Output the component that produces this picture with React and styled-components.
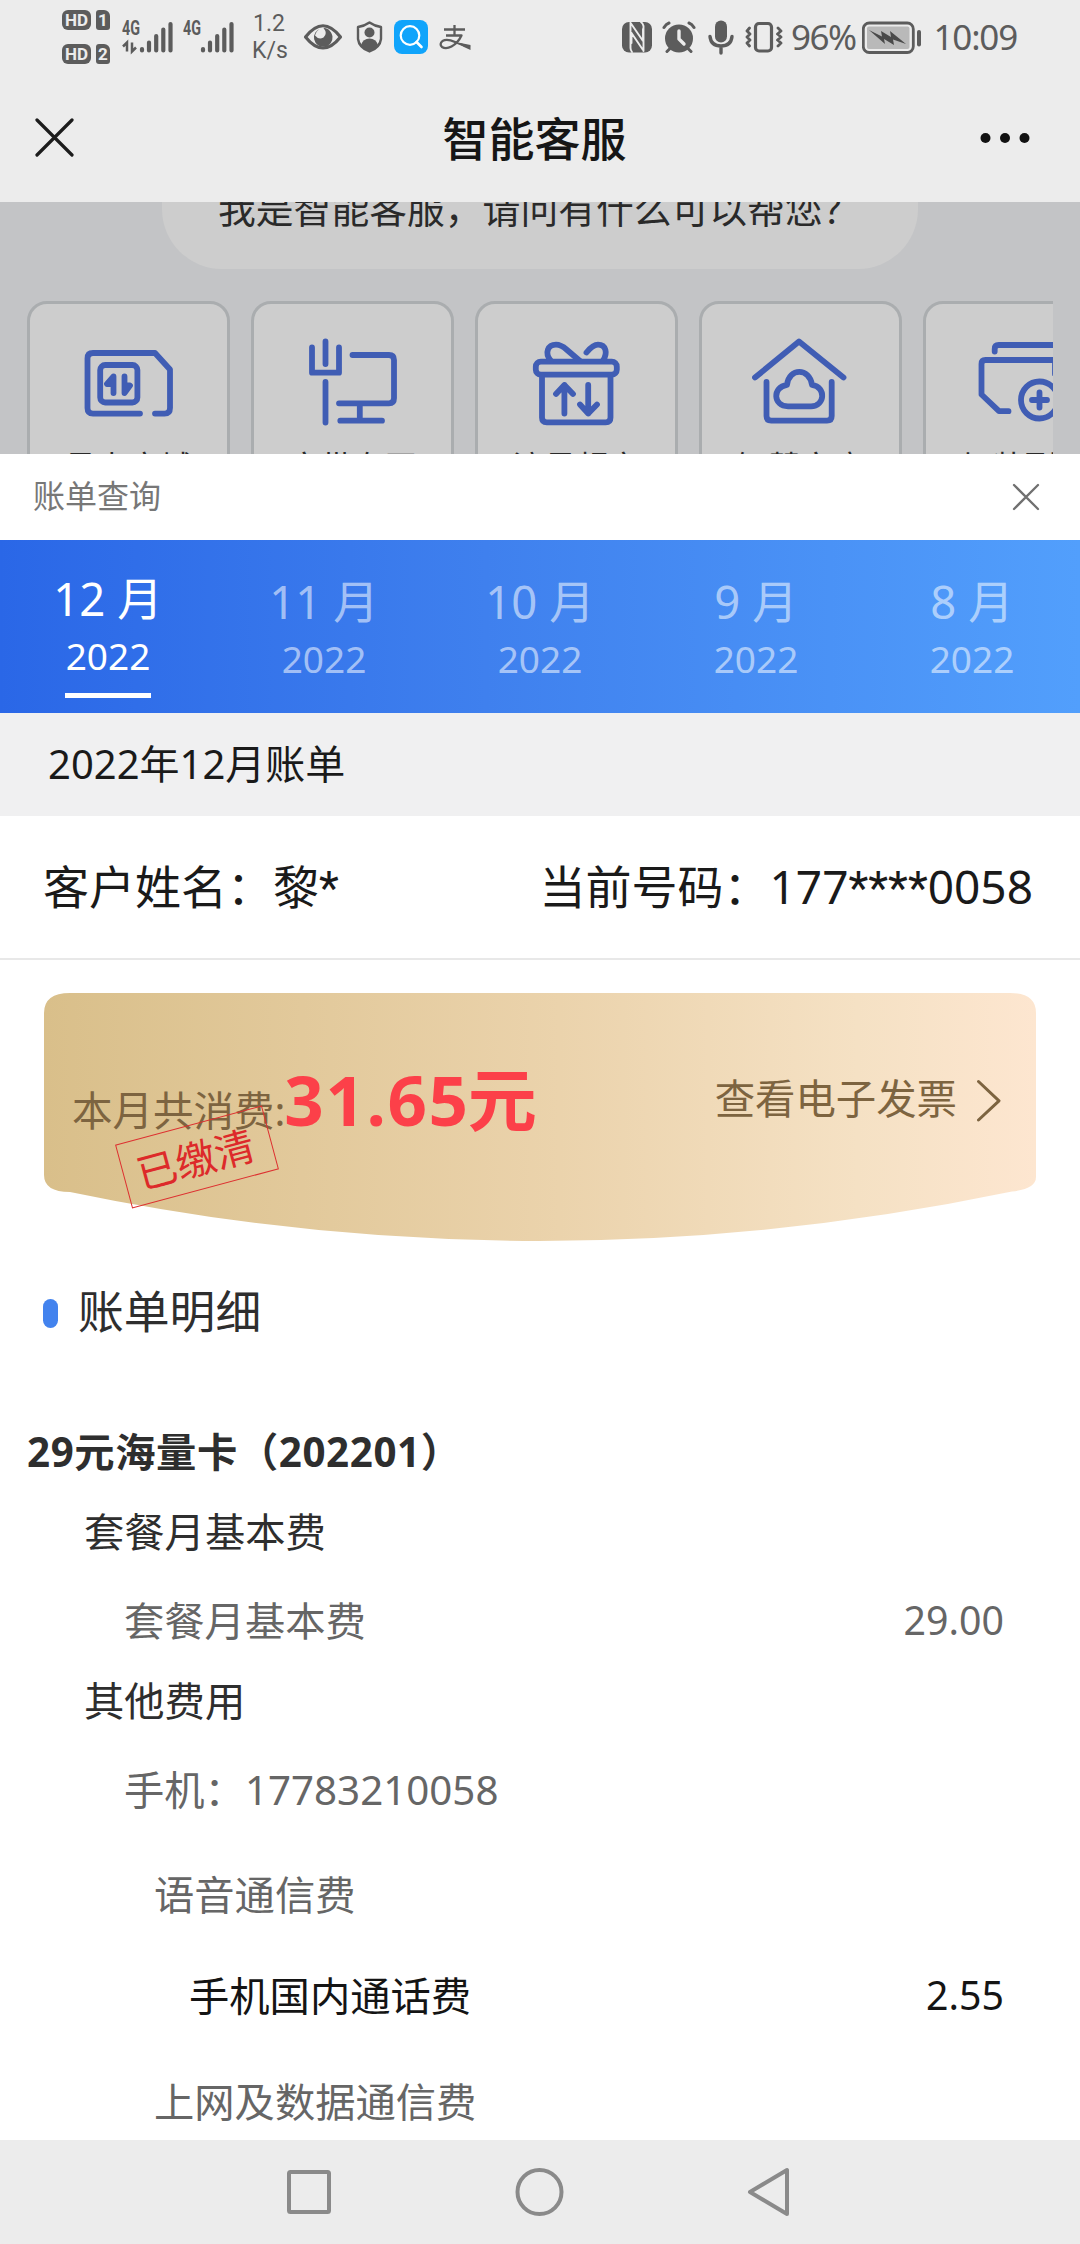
import React from 'react';
import styled, { createGlobalStyle } from 'styled-components';

const GlobalStyle = createGlobalStyle`
  * {
    box-sizing: border-box;
  }

  body {
    background-color: #ffffff;
    font-family: 'Noto Sans', 'Noto Sans CJK SC', sans-serif;
    margin: 0;
  }
`

const Page = styled.div`
  display: flex;
  flex-direction: column;
  height: 2244px;
  overflow: hidden;
  width: 1080px;
`

const StatusBar = styled.div`
  background-color: #ececec;
  color: #5c5c5c;
  display: flex;
  flex-shrink: 0;
  height: 74px;
  justify-content: space-between;
  padding: 0 63px 0 62px;
`

const StatusGroup = styled.div`
  align-items: center;
  display: flex;
  height: 73px;
`

const SimList = styled.div`
  display: flex;
  flex-direction: column;
  gap: 14px;
`

const Sim = styled.div`
  display: flex;
  gap: 5px;
`

const SimTag = styled.span`
  background-color: #5c5c5c;
  border-radius: ${props => props.$slot ? '3px 6px 3px 3px' : '6px'};
  color: #ececec;
  font-family: Roboto, sans-serif;
  font-size: 17px;
  font-weight: 700;
  height: 20px;
  line-height: 21px;
  text-align: center;
  width: ${props => props.$slot ? '14px' : '29px'};
`

const Signal = styled.svg`
  height: 34px;
  margin-left: ${props => props.$gap}px;
  overflow: visible;
  width: 51px;
`

const SignalText = styled.text`
  fill: #5c5c5c;
  font-family: Roboto, sans-serif;
  font-size: 20px;
  font-weight: 700;
`

const Speed = styled.div`
  font-family: Roboto, sans-serif;
  font-size: 23px;
  line-height: 27px;
  margin-left: 18px;
  text-align: center;
  width: 34px;
`

const StatusIcon = styled.svg`
  fill: none;
  height: 36px;
  margin-left: ${props => props.$gap}px;
  stroke: #5c5c5c;
  stroke-linecap: round;
  stroke-linejoin: round;
  width: ${props => props.$width}px;
`

const StatusText = styled.span`
  font-size: 35px;
  letter-spacing: ${props => props.$spacing}px;
  line-height: 40px;
  margin-left: ${props => props.$gap}px;
  padding-top: 1px;
`

const TitleBar = styled.header`
  align-items: center;
  background-color: #ececec;
  display: flex;
  flex-shrink: 0;
  height: 128px;
  justify-content: space-between;
  padding: 0 49px 0 34px;
`

const Title = styled.h1`
  color: #161616;
  font-size: 46px;
  font-weight: 500;
  line-height: 60px;
  margin: 0;
  padding: 0 0 1px 15px;
`

const LineIcon = styled.svg`
  display: block;
  fill: none;
  flex-shrink: 0;
  stroke: ${props => props.color};
  stroke-linecap: round;
  stroke-linejoin: round;
`

const Chat = styled.section`
  background-color: #c3c4c6;
  display: flex;
  flex-direction: column;
  flex-shrink: 0;
  height: 252px;
  overflow: hidden;
`

const Bubble = styled.div`
  align-self: center;
  background-color: #cdcdcd;
  border-radius: 0 0 60px 60px;
  color: #2a2a2a;
  flex-shrink: 0;
  font-size: 37.8px;
  height: 67px;
  line-height: 14px;
  padding-left: 56px;
  white-space: nowrap;
  width: 756px;
`

const Services = styled.div`
  display: flex;
  flex-shrink: 0;
  gap: 21px;
  margin: 32px 27px 0;
  overflow: hidden;
`

const Service = styled.div`
  align-items: center;
  background-color: #cdcdcd;
  border: 3px solid #aaadaf;
  border-radius: 20px;
  color: #2a2a2a;
  display: flex;
  flex-direction: column;
  flex-shrink: 0;
  font-size: 32px;
  height: 220px;
  line-height: 40px;
  padding-top: 29px;
  width: 203px;
`

const ServiceIcon = styled.svg`
  fill: none;
  height: 100px;
  margin-bottom: 14px;
  stroke: #405db4;
  stroke-linecap: round;
  stroke-linejoin: round;
  stroke-width: 5.8;
  width: 120px;
`

const SheetHeader = styled.div`
  align-items: center;
  color: #777777;
  display: flex;
  flex-shrink: 0;
  font-size: 32px;
  height: 86px;
  justify-content: space-between;
  padding: 0 39px 0 33px;
`

const SheetTitle = styled.span`
  line-height: 40px;
  padding-bottom: 2px;
`

const Months = styled.nav`
  background: linear-gradient(90deg, #2a67e7 0%, #3f80ee 45%, #529ffc 100%);
  display: grid;
  flex-shrink: 0;
  grid-template-columns: repeat(5, 1fr);
  height: 173px;
`

const Month = styled.div`
  align-items: center;
  color: ${props => props.$active ? '#ffffff' : 'rgba(255, 255, 255, 0.55)'};
  display: flex;
  flex-direction: column;
  font-size: 45.5px;
  line-height: 56px;
  padding-top: ${props => props.$active ? '30px' : '33px'};
`

const Year = styled.span`
  border-bottom: 5px solid ${props => props.$active ? '#ffffff' : 'transparent'};
  font-size: 37px;
  height: 72px;
  line-height: 60px;
  padding: 0 1px;
`

const BillTitle = styled.h2`
  background-color: #f0f0f1;
  color: #1a1a1a;
  flex-shrink: 0;
  font-size: 40px;
  font-weight: 400;
  height: 103px;
  line-height: 101px;
  margin: 0;
  padding-left: 48px;
`

const Customer = styled.div`
  border-bottom: 2px solid #e8e8e8;
  color: #1a1a1a;
  display: flex;
  flex-shrink: 0;
  font-size: 46px;
  height: 144px;
  justify-content: space-between;
  line-height: 140px;
  padding: 0 47px 0 43px;
`

const Mask = styled.span`
  font-family: Roboto, sans-serif;
`

const Summary = styled.section`
  display: flex;
  flex-shrink: 0;
  height: 248px;
  justify-content: space-between;
  margin: 33px 44px 0;
  position: relative;

  &:before {
    background: linear-gradient(90deg, #d9bf8a 0%, #ebd3ac 52%, #f5e1c4 82%, #fde6d0 100%);
    clip-path: path('M26 0H966Q992 0 992 20V184Q992 196 968 198.500Q496 297 26 199Q0 199 0 182V20Q0 0 26 0Z');
    content: '';
    inset: 0;
    position: absolute;
    z-index: -1;
  }
`

const Total = styled.div`
  align-items: baseline;
  color: #7d6440;
  display: flex;
  font-size: 40.5px;
  height: 213px;
  line-height: 213px;
  padding-left: 28px;
`

const Amount = styled.strong`
  color: #fc4049;
  font-size: 69px;
  font-weight: 700;
  letter-spacing: 1.6px;
  margin-left: -1px;
`

const Unit = styled.span`
  margin-left: -2px;
`

const Stamp = styled.span`
  border: 1.5px solid #dd3030;
  color: #dd2a2a;
  font-size: 40px;
  height: 66px;
  left: 77px;
  line-height: 67px;
  padding-right: 4px;
  position: absolute;
  text-align: center;
  top: 131px;
  transform: rotate(-15deg);
  width: 152px;
`

const InvoiceLink = styled.a`
  align-items: center;
  color: #7d6440;
  display: flex;
  font-size: 40.4px;
  gap: 18px;
  height: 213px;
  padding-right: 34px;
`

const LinkText = styled.span`
  line-height: 50px;
  padding-bottom: 1px;
`

const SectionTitle = styled.h3`
  align-items: center;
  color: #2e2e2e;
  display: flex;
  flex-shrink: 0;
  font-size: 45.8px;
  font-weight: 400;
  gap: 20px;
  height: 72px;
  line-height: 72px;
  margin: 34px 0 62px 43px;

  &:before {
    background-color: #4383ee;
    border-radius: 8px;
    content: '';
    height: 29px;
    margin-top: 4px;
    width: 15px;
  }
`

const Bill = styled.div`
  flex: 1;
  min-height: 0;
  overflow: hidden;
`

const BillRow = styled.div`
  align-items: center;
  color: ${props => props.color};
  display: flex;
  font-size: 40.3px;
  font-weight: ${props => props.$bold ? 700 : 400};
  height: ${props => props.$height}px;
  justify-content: space-between;
  letter-spacing: ${props => props.$bold ? '0.6px' : 'normal'};
  padding: 0 76px 0 ${props => props.$indent}px;
`

const Value = styled.span`
  font-size: 39.3px;
  padding-top: 4px;
`

const NavBar = styled.footer`
  align-items: center;
  background-color: #ececec;
  display: flex;
  flex-shrink: 0;
  gap: 180px;
  height: 104px;
  padding-left: 284px;
`

const services = [
  {
    name: '号卡商城',
    icon: (
      <>
        <path d="M71 80.6H24q-5.500 0-5.500-5.500V25.500q0-5.500 5.500-5.500H86L101 36.500V75q0 5.600-5.500 5.600H86" />
        <rect x="31.200" y="32" width="37.200" height="37.500" rx="5" />
        <path d="M44.500 60V43.500L38 51h6M55.500 43.500V60L61 52.500h-5" />
      </>
    )
  },
  {
    name: '宽带专区',
    icon: (
      <>
        <path d="M19 14.400V39.700H46V14.400M32.500 8.400V31M32.500 49V89.500" />
        <path d="M59.500 22H96q5 0 5 5V65.300q0 5-5 5H46M66.800 70.300V87.700M47.300 87.700H89" />
      </>
    )
  },
  {
    name: '流量超市',
    icon: (
      <>
        <rect x="18.800" y="28.700" width="81" height="13" rx="5" />
        <path d="M25 42V84.500q0 4.800 4.800 4.800H88.700q4.800 0 4.800-4.800V42" />
        <path d="M34 28C27 20 31 11.700 39 11.700c4 0 6.500 1.300 10.500 4.800L63 28M69.500 19.500C74 14 77 11.700 81 11.700c8 0 10 8.300 5 16" />
        <path d="M47.400 80.500V52L39 61M47.400 52L56 61M71.200 52V80.500L63 71.500M71.200 80.500L80 71.500" />
      </>
    )
  },
  {
    name: '智慧家庭',
    icon: (
      <>
        <path d="M14 44.500L58 8.500L102.500 44.500" />
        <path d="M25.500 49V83q0 4.700 4.700 4.700H86q4.700 0 4.700-4.700V49" />
        <path d="M47 73.300C32 73.300 31 54 46 51.800C48 34.500 68.500 34.500 71 51.800C85.500 54 84 73.300 70 73.300Z" />
      </>
    )
  },
  {
    name: '加装副卡',
    icon: (
      <>
        <path d="M29.700 18.500V16q0-4 4-4H100V30" />
        <path d="M43.500 78.200H34L16.500 61.500V31q0-4 4-4H90V41" />
        <circle cx="74.500" cy="67" r="18.500" />
        <path d="M67 67H82M74.500 59.500V74.500" />
      </>
    )
  }
]

const months = [
  { month: 12, year: 2022 },
  { month: 11, year: 2022 },
  { month: 10, year: 2022 },
  { month: 9, year: 2022 },
  { month: 8, year: 2022 }
]

const billRows = [
  { label: '29元海量卡（202201）', indent: 27, height: 80, color: '#2e2e2e', bold: true },
  { label: '套餐月基本费', indent: 84, height: 80, color: '#2e2e2e' },
  { label: '套餐月基本费', value: '29.00', indent: 124, height: 98, color: '#666666' },
  { label: '其他费用', indent: 84, height: 62, color: '#2e2e2e' },
  { label: '手机：17783210058', indent: 124, height: 116, color: '#666666' },
  { label: '语音通信费', indent: 154, height: 94, color: '#666666' },
  { label: '手机国内通话费', value: '2.55', indent: 189, height: 108, color: '#141414' },
  { label: '上网及数据通信费', indent: 154, height: 104, color: '#666666' }
]

const SignalBars = ({ gap, data }) => (
  <Signal $gap={gap} viewBox="0 0 51 34">
    <SignalText x="0" y="15.300" textLength="18" lengthAdjust="spacingAndGlyphs">4G</SignalText>
    {data && <path d="M1 26.500L5 22.500V31.500M10 22.500V31.500L14 27.500" stroke="#5c5c5c" strokeWidth="2.500" fill="none" />}
    <path
      d="M20 29V30.500M27 22.500V30.500M34.200 16V30.500M41.300 9.500V30.500M48.500 4V30.500"
      stroke="#5c5c5c"
      strokeLinecap="round"
      strokeWidth="4.200"
    />
  </Signal>
)

const Status = () => (
  <StatusBar>
    <StatusGroup>
      <SimList>
        <Sim><SimTag>HD</SimTag><SimTag $slot>1</SimTag></Sim>
        <Sim><SimTag>HD</SimTag><SimTag $slot>2</SimTag></Sim>
      </SimList>
      <SignalBars gap={12} data />
      <SignalBars gap={10} />
      <Speed>1.2 K/s</Speed>
      <StatusIcon $gap={17} $width={40} viewBox="0 0 40 36">
        <path d="M2.500 18Q20-4.500 37.500 18Q20 40 2.500 18Z" strokeWidth="3.200" />
        <path d="M18 9.500a9.300 9.300 0 1 0 11.500 8C29 13 25 8.500 20.500 9q4.500 5.500 0 9.500q-5 2.500-8.500-2Q13.500 11 18 9.500Z" fill="#5c5c5c" stroke="none" />
      </StatusIcon>
      <StatusIcon $gap={13} $width={27} viewBox="0 0 27 36">
        <path d="M13.500 3.500Q18.500 7 25 8V20Q24 28.500 13.500 32.500Q3 28.500 2 20V8Q8.500 7 13.500 3.500Z" strokeWidth="2.400" />
        <circle cx="13.500" cy="13.500" r="5" fill="#5c5c5c" stroke="none" />
        <path d="M5 26Q7 19.500 13.500 19.500T22 26Q18 31 13.500 32.500Q8 30.500 5 26Z" fill="#5c5c5c" stroke="none" />
      </StatusIcon>
      <StatusIcon $gap={11} $width={34} viewBox="0 0 34 36">
        <rect y="1" width="34" height="34" rx="8" fill="#10a4fb" stroke="none" />
        <circle cx="16" cy="16.500" r="9.300" stroke="#ffffff" strokeWidth="2.200" />
        <path d="M22.500 23L27.500 28" stroke="#ffffff" strokeWidth="2.600" />
      </StatusIcon>
      <StatusIcon $gap={11} $width={32} viewBox="0 0 32 36">
        <path d="M5 10.500H26M15.500 6V16M7 16.500H22.500Q19 24 12.500 27.500Q7 30.500 3 28Q0 25 3.500 22Q8 19.500 16 23Q24 26.500 31 28" strokeLinecap="butt" strokeWidth="2.300" />
        <path d="M19 23.500L31.500 26V31Q25 28.500 19 24.500Z" fill="#5c5c5c" stroke="none" />
      </StatusIcon>
    </StatusGroup>
    <StatusGroup>
      <StatusIcon $gap={0} $width={30} viewBox="0 0 30 36">
        <rect y="3" width="30" height="30.500" rx="7" fill="#5c5c5c" stroke="none" />
        <path d="M8.500 3.500V29Q8.500 31 10 33M9 4.500L21 22V10M9.500 14V24M9.500 14L21 31M21.500 32V7Q21 4.500 19 3" stroke="#ececec" strokeWidth="1.900" />
      </StatusIcon>
      <StatusIcon $gap={10} $width={34} viewBox="0 0 34 36">
        <circle cx="17" cy="19.500" r="14" fill="#5c5c5c" stroke="none" />
        <path d="M2 8.500Q4 5 7 4M32 8.500Q30 5 27 4M7.500 30L5 32.500M26.500 30L29 32.500" strokeWidth="3" />
        <path d="M17 12V20L22 25" stroke="#ececec" strokeWidth="3.400" />
      </StatusIcon>
      <StatusIcon $gap={12} $width={26} viewBox="0 0 26 36">
        <rect x="7" y="1.500" width="12" height="22" rx="6" fill="#5c5c5c" stroke="none" />
        <path d="M2 17.500Q3 27 13 27T24 17.500M13 27.500V34" strokeWidth="3.400" />
      </StatusIcon>
      <StatusIcon $gap={10} $width={40} viewBox="0 0 40 36">
        <rect x="11.500" y="4.500" width="16" height="27.500" rx="3.500" strokeWidth="3.200" />
        <path d="M5.500 9L3 12L6 15L3 18L6 21L3 24L5.500 27M34 9L37 12L33.500 15L37 18L33.500 21L37 24L34 27" strokeWidth="2.800" />
      </StatusIcon>
      <StatusText $gap={7} $spacing={-1.5}>96%</StatusText>
      <StatusIcon $gap={6} $width={60} viewBox="0 0 60 36">
        <rect x="1.300" y="4" width="50" height="29.500" rx="6" strokeWidth="2.800" />
        <rect x="5" y="7.500" width="42.500" height="22.500" rx="2" fill="#b9b9b9" stroke="none" />
        <path d="M7 11L20 17.500L19 12L29 18L28 12L44 25L31 20.500L32 26L22 20L23 25Z" fill="#4a4a4a" stroke="none" />
        <path d="M57 13V25.500" strokeWidth="4" />
      </StatusIcon>
      <StatusText $gap={12} $spacing={-1.2}>10:09</StatusText>
    </StatusGroup>
  </StatusBar>
)

const App = () => (
  <>
    <GlobalStyle />
    <Page>
      <Status />
      <TitleBar>
        <LineIcon color="#1c1c1c" width="41" height="41" viewBox="0 0 41 41" strokeWidth="3.200">
          <path d="M3 2L38 37M38 2L3 37" />
        </LineIcon>
        <Title>智能客服</Title>
        <svg width="52" height="12" viewBox="0 0 52 12" fill="#111111">
          <circle cx="6.500" cy="6" r="5" />
          <circle cx="26" cy="6" r="5" />
          <circle cx="45.500" cy="6" r="5" />
        </svg>
      </TitleBar>
      <Chat>
        <Bubble>我是智能客服，请问有什么可以帮您？</Bubble>
        <Services>
          {services.map(service => (
            <Service key={service.name}>
              <ServiceIcon viewBox="0 0 120 100">{service.icon}</ServiceIcon>
              {service.name}
            </Service>
          ))}
        </Services>
      </Chat>
      <SheetHeader>
        <SheetTitle>账单查询</SheetTitle>
        <LineIcon color="#707070" width="30" height="30" viewBox="0 0 30 30" strokeWidth="2.300">
          <path d="M3 3L27 27M27 3L3 27" />
        </LineIcon>
      </SheetHeader>
      <Months>
        {months.map(({ month, year }, index) => (
          <Month key={month} $active={index === 0}>
            {month} 月
            <Year $active={index === 0}>{year}</Year>
          </Month>
        ))}
      </Months>
      <BillTitle>2022年12月账单</BillTitle>
      <Customer>
        <span>客户姓名：黎<Mask>*</Mask></span>
        <span>当前号码：177<Mask>****</Mask>0058</span>
      </Customer>
      <Summary>
        <Total>本月共消费:<Amount>31.65<Unit>元</Unit></Amount></Total>
        <InvoiceLink>
          <LinkText>查看电子发票</LinkText>
          <LineIcon color="#7d6440" width="27" height="44" viewBox="0 0 27 44" strokeWidth="3">
            <path d="M3.500 3.500L24 22.800L3.500 42" />
          </LineIcon>
        </InvoiceLink>
        <Stamp>已缴清</Stamp>
      </Summary>
      <SectionTitle>账单明细</SectionTitle>
      <Bill>
        {billRows.map((row, index) => (
          <BillRow key={index} color={row.color} $bold={row.bold} $height={row.height} $indent={row.indent}>
            <span>{row.label}</span>
            {row.value && <Value>{row.value}</Value>}
          </BillRow>
        ))}
      </Bill>
      <NavBar>
        <LineIcon color="#8a8a8a" width="50" height="50" viewBox="0 0 50 50" strokeWidth="4">
          <rect x="5" y="5" width="40" height="40" rx="1.500" />
        </LineIcon>
        <LineIcon color="#8a8a8a" width="50" height="50" viewBox="0 0 50 50" strokeWidth="4">
          <circle cx="25.500" cy="25" r="22" />
        </LineIcon>
        <LineIcon color="#8a8a8a" width="50" height="50" viewBox="0 0 50 50" strokeWidth="4">
          <path d="M43 3V47L6 25Z" />
        </LineIcon>
      </NavBar>
    </Page>
  </>
)

export default App
